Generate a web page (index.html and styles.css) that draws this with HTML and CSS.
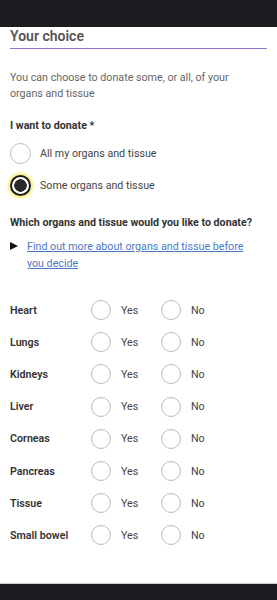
FILE: index.html
```html
<!DOCTYPE html>
<html lang="en">
<head>
    <meta charset="UTF-8">
    <meta name="viewport" content="width=device-width, initial-scale=1.0">
    <title>Your choice</title>
    <link rel="stylesheet" href="styles.css">
</head>
<body>

<div class="topbar"></div>

<div class="container">
    <h2 class="section-title">Your choice</h2>

    <p class="intro">You can choose to donate some, or all, of your organs and tissue</p>

    <p class="label">I want to donate *</p>
    <label class="choice">
        <input type="radio" name="donate">
        <span>All my organs and tissue</span>
    </label>
    <label class="choice">
        <input type="radio" name="donate" class="focused" checked>
        <span>Some organs and tissue</span>
    </label>

    <p class="label question">Which organs and tissue would you like to donate?</p>
    <div class="details">
        <span class="arrow"></span>
        <a href="#">Find out more about organs and tissue before you decide</a>
    </div>

    <div class="organs">
        <div class="organ-row">
            <span class="organ">Heart</span>
            <label class="opt"><input type="radio" name="heart"><span>Yes</span></label>
            <label class="opt"><input type="radio" name="heart"><span>No</span></label>
        </div>
        <div class="organ-row">
            <span class="organ">Lungs</span>
            <label class="opt"><input type="radio" name="lungs"><span>Yes</span></label>
            <label class="opt"><input type="radio" name="lungs"><span>No</span></label>
        </div>
        <div class="organ-row">
            <span class="organ">Kidneys</span>
            <label class="opt"><input type="radio" name="kidneys"><span>Yes</span></label>
            <label class="opt"><input type="radio" name="kidneys"><span>No</span></label>
        </div>
        <div class="organ-row">
            <span class="organ">Liver</span>
            <label class="opt"><input type="radio" name="liver"><span>Yes</span></label>
            <label class="opt"><input type="radio" name="liver"><span>No</span></label>
        </div>
        <div class="organ-row">
            <span class="organ">Corneas</span>
            <label class="opt"><input type="radio" name="corneas"><span>Yes</span></label>
            <label class="opt"><input type="radio" name="corneas"><span>No</span></label>
        </div>
        <div class="organ-row">
            <span class="organ">Pancreas</span>
            <label class="opt"><input type="radio" name="pancreas"><span>Yes</span></label>
            <label class="opt"><input type="radio" name="pancreas"><span>No</span></label>
        </div>
        <div class="organ-row">
            <span class="organ">Tissue</span>
            <label class="opt"><input type="radio" name="tissue"><span>Yes</span></label>
            <label class="opt"><input type="radio" name="tissue"><span>No</span></label>
        </div>
        <div class="organ-row">
            <span class="organ">Small bowel</span>
            <label class="opt"><input type="radio" name="bowel"><span>Yes</span></label>
            <label class="opt"><input type="radio" name="bowel"><span>No</span></label>
        </div>
    </div>
</div>

<footer></footer>

</body>
</html>
```

FILE: styles.css
```css
body {
    font-family: Roboto, "Liberation Sans", Arial, sans-serif;
    margin: 0;
    padding: 0;
    background-color: #fff;
    color: #333;
    display: flex;
    flex-direction: column;
    min-height: 100vh;
}
.topbar {
    background-color: #1c1b20;
    height: 27px;
}
.container {
    padding: 0 10px;
    flex-grow: 1;
}
.section-title {
    margin: 0;
    font-size: 14px;
    line-height: 18px;
    font-weight: 600;
    color: #555;
    padding-bottom: 3px;
    border-bottom: 1px solid #9575c4;
}
.intro {
    margin: 21px 0 0 0;
    padding-right: 20px;
    font-size: 10.7px;
    line-height: 16px;
    color: #666;
}
.label {
    margin: 16px 0 3px 0;
    font-size: 10.7px;
    line-height: 16px;
    font-weight: 700;
    color: #333;
}
.question {
    margin-top: 14px;
    margin-bottom: 7px;
}
input[type="radio"] {
    appearance: none;
    -webkit-appearance: none;
    margin: 0;
    width: 21px;
    height: 21px;
    border: 1px solid #bbb;
    border-radius: 50%;
    background: #fff;
    box-sizing: border-box;
    flex-shrink: 0;
}
input[type="radio"]:checked {
    border: 2.5px solid #1a1a1a;
    background: radial-gradient(circle, #2a2a2a 0 6px, #fff 6.5px);
}
input[type="radio"].focused {
    box-shadow: 0 0 3px 2px #fdea6c;
}
.choice {
    display: flex;
    align-items: center;
    height: 32px;
    font-size: 10.7px;
    color: #444;
}
.choice input {
    margin-right: 9px;
}
.details {
    display: flex;
    align-items: flex-start;
    padding-right: 20px;
    font-size: 10.7px;
    line-height: 17px;
}
.arrow {
    width: 0;
    height: 0;
    border-left: 8px solid #111;
    border-top: 4.5px solid transparent;
    border-bottom: 4.5px solid transparent;
    margin: 4px 9px 0 0;
    flex-shrink: 0;
}
.details a {
    color: #4a7ac6;
    text-decoration: underline;
}
.organs {
    margin-top: 22px;
}
.organ-row {
    display: flex;
    align-items: center;
    height: 32.2px;
    font-size: 10.7px;
}
.organ {
    width: 81px;
    font-weight: 600;
    color: #333;
}
.opt {
    display: flex;
    align-items: center;
    width: 70px;
    color: #444;
}
.opt input {
    width: 20px;
    height: 20px;
    margin-right: 10px;
}
footer {
    background-color: #1c1b20;
    border-top: 1px solid #ccc;
    height: 16px;
    margin-top: auto;
}
```
